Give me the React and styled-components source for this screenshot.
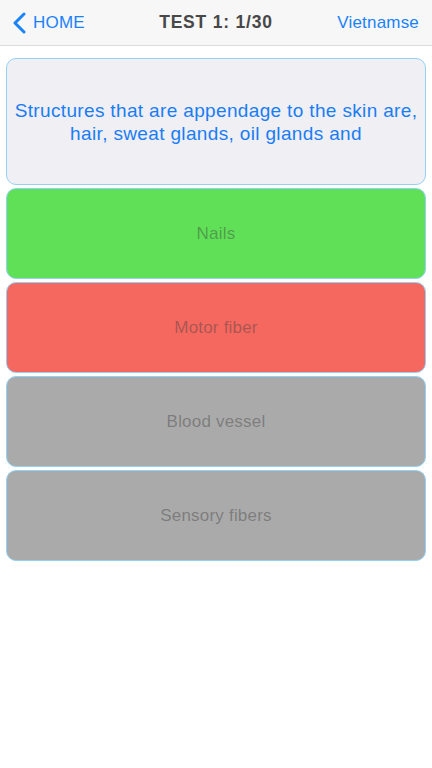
import React from 'react';
import styled, { createGlobalStyle } from 'styled-components';

const GlobalStyle = createGlobalStyle`
  body {
    margin: 0;
    background: #ffffff;
    font-family: "Liberation Sans", Arial, sans-serif;
  }
`;

const answers = [
  { text: 'Nails', bg: '#5fe057' },
  { text: 'Motor fiber', bg: '#f56860' },
  { text: 'Blood vessel', bg: '#aaaaaa' },
  { text: 'Sensory fibers', bg: '#aaaaaa' },
];

const App = () => {
  return (
    <>
      <GlobalStyle />
      <Screen>
        <NavBar>
          <BackButton>
            <svg width="16" height="22" viewBox="0 0 16 22">
              <path d="M12 2 L3 11 L12 20" fill="none" stroke="#1a82fb" strokeWidth="3" strokeLinecap="round" strokeLinejoin="round" />
            </svg>
            <span>HOME</span>
          </BackButton>
          <Title>TEST 1: 1/30</Title>
          <NavLink>Vietnamse</NavLink>
        </NavBar>
        <Content>
          <QuestionCard>
            Structures that are appendage to the skin are, hair, sweat glands, oil glands and
          </QuestionCard>
          {answers.map((a) => (
            <AnswerCard key={a.text} bg={a.bg}>{a.text}</AnswerCard>
          ))}
        </Content>
      </Screen>
    </>
  );
};

const Screen = styled.div`
  width: 432px;
  height: 768px;
  background: #fff;
`;

const NavBar = styled.header`
  height: 45px;
  background: #f7f7f7;
  border-bottom: 1px solid #dcdcdc;
  display: flex;
  align-items: center;
  justify-content: space-between;
  padding: 0 13px 0 12px;
  position: relative;
  font-size: 17px;
  letter-spacing: 0.2px;
`;

const BackButton = styled.div`
  display: flex;
  align-items: center;
  gap: 5px;
  color: #1a82fb;
  svg { display: block; }
`;

const Title = styled.div`
  position: absolute;
  left: 0;
  right: 0;
  text-align: center;
  font-weight: bold;
  font-size: 17.5px;
  letter-spacing: 0.8px;
  color: #484848;
  pointer-events: none;
`;

const NavLink = styled.div`
  color: #1a82fb;
`;

const Content = styled.main`
  padding: 12px 6px 0 6px;
  display: flex;
  flex-direction: column;
  gap: 3px;
`;

const Card = styled.div`
  box-sizing: border-box;
  border: 1px solid #92d2f5;
  border-radius: 10px;
  display: flex;
  align-items: center;
  justify-content: center;
  text-align: center;
`;

const QuestionCard = styled(Card)`
  height: 127px;
  background: #efeff4;
  color: #1a7df5;
  font-size: 19px;
  letter-spacing: 0.35px;
  line-height: 23px;
  padding: 0 3px;
`;

const AnswerCard = styled(Card)`
  height: 91px;
  background: ${(p) => p.bg};
  color: rgba(60, 60, 60, 0.42);
  font-size: 17px;
  letter-spacing: 0.2px;
`;

export default App;
